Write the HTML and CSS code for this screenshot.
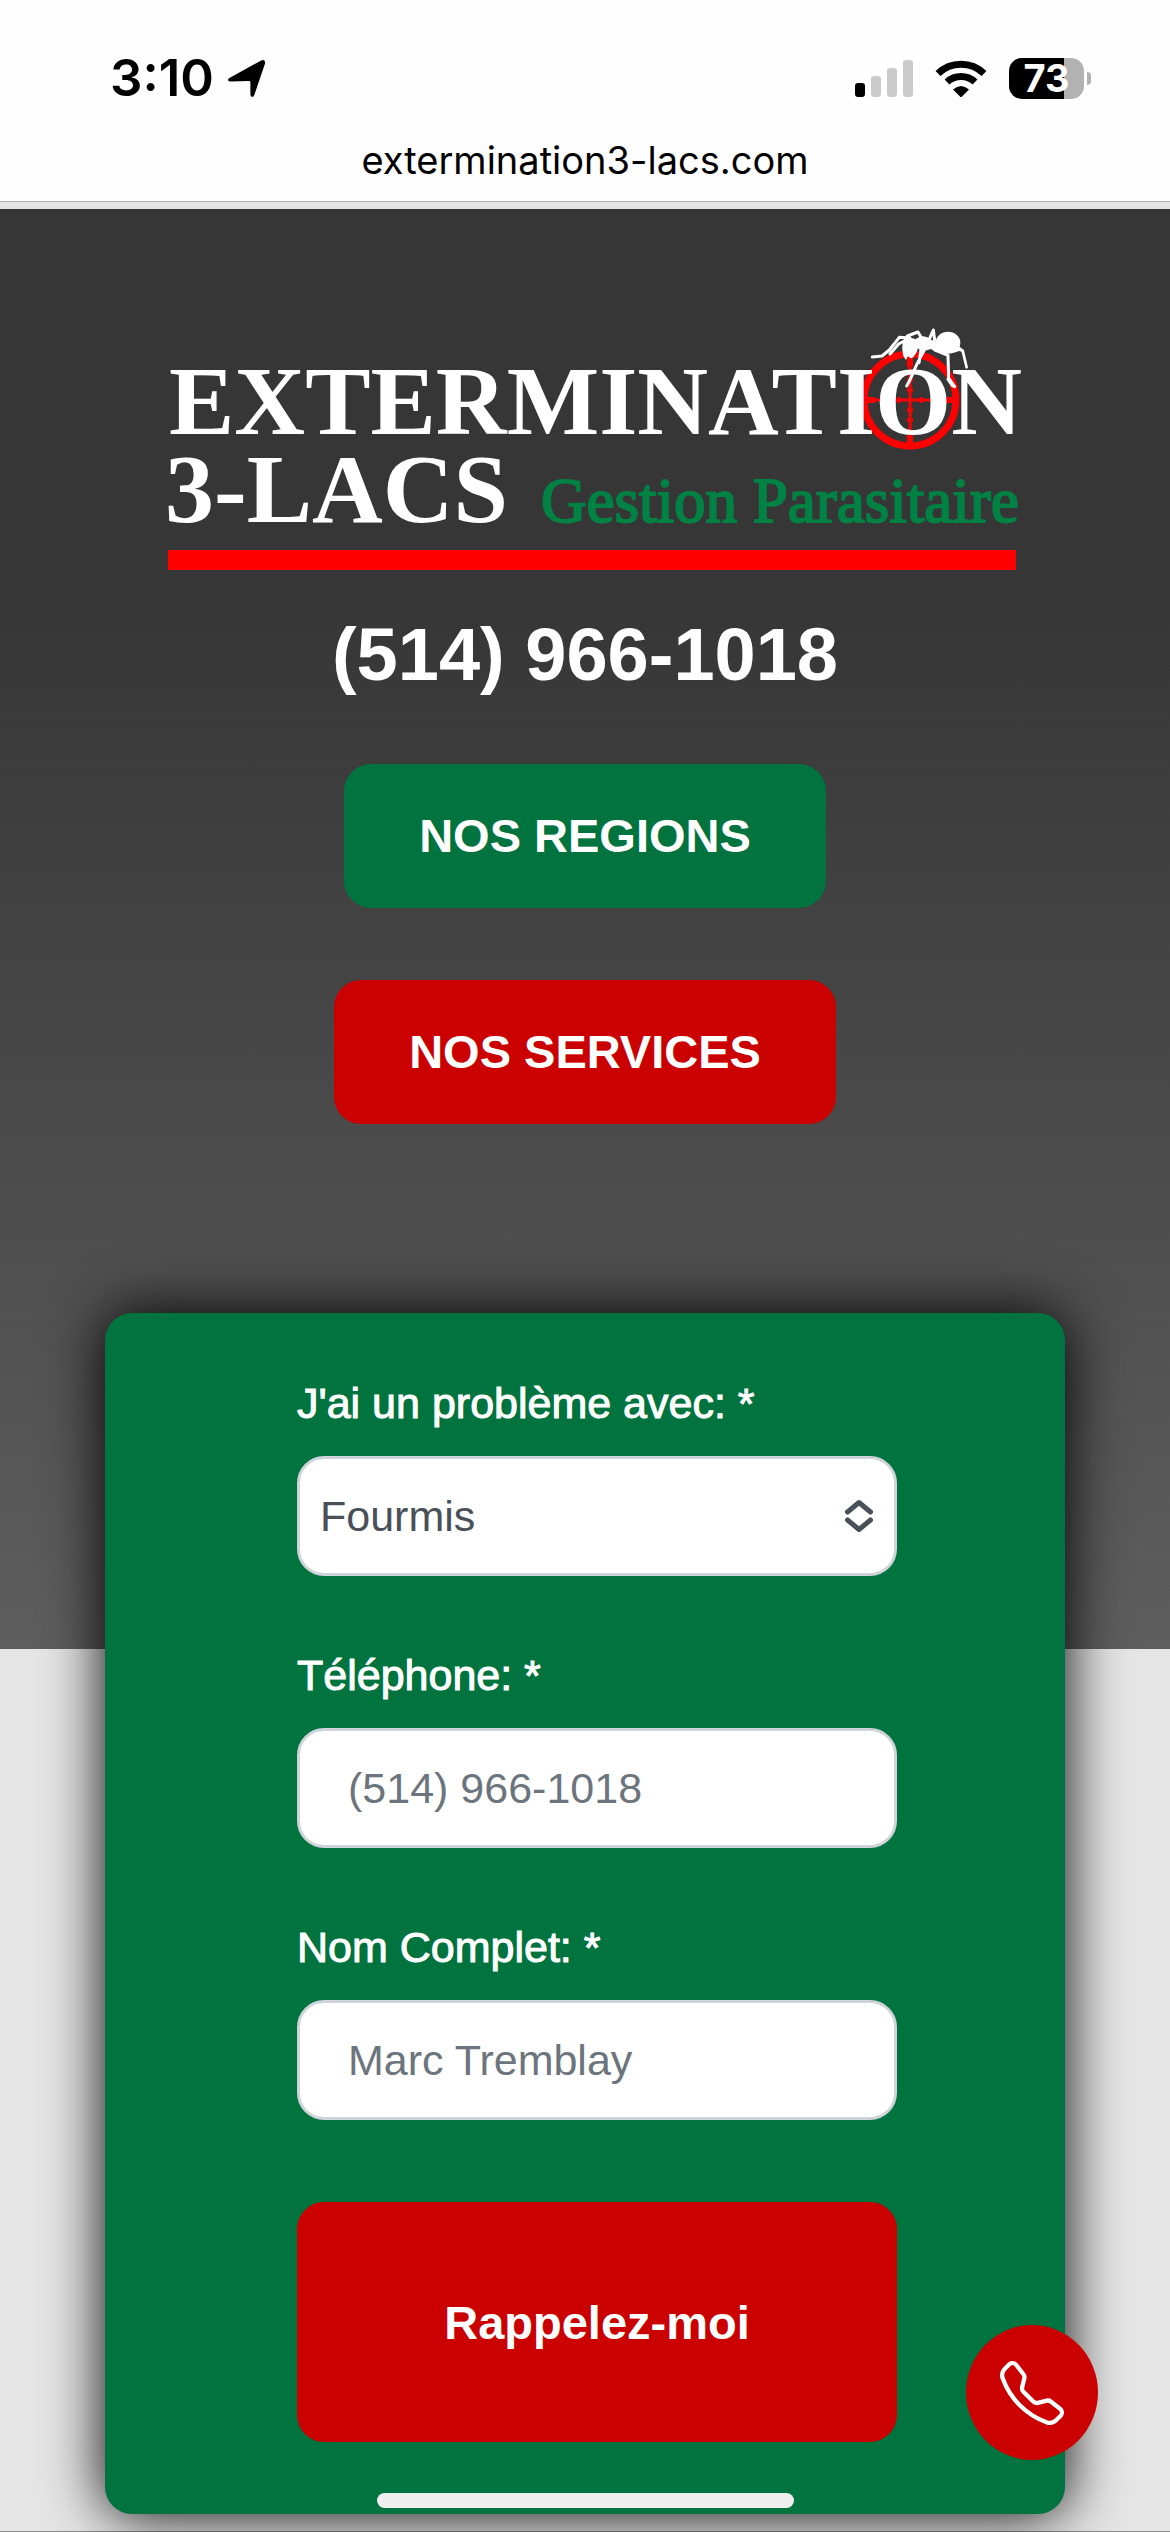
FILE: index.html
```html
<!DOCTYPE html>
<html lang="fr">
<head>
<meta charset="utf-8">
<meta name="viewport" content="width=device-width, initial-scale=1">
<title>Extermination 3-Lacs</title>
<link rel="stylesheet" href="styles.css">
</head>
<body>
<header class="browser-bar">
  <div class="status">
    <div class="status-left">
      <span class="time">3:10</span>
      <svg class="location" viewBox="0 0 40 40" aria-hidden="true"><path d="M2.500 19.500 35 1.500Q39.500 0 39 4.500L28 37Q26 41 24 37V24Q24 22.500 22.500 22.500L3 23Q-1 22 2.500 19.500Z"/></svg>
    </div>
    <div class="status-right">
      <svg class="signal" viewBox="0 0 58 38" aria-hidden="true"><rect y="24" width="10" height="14" rx="3"/><g fill="#cbcbcb"><rect x="16" y="17" width="10" height="21" rx="3"/><rect x="32" y="9" width="10" height="29" rx="3"/><rect x="48" y="1" width="10" height="37" rx="3"/></g></svg>
      <svg class="wifi" viewBox="0 0 52 38" aria-hidden="true"><g fill="none" stroke="#000" stroke-width="7"><path d="M3 14.500a33 33 0 0 1 46 0"/><path d="M12 23a20.500 20.500 0 0 1 28 0"/></g><path d="M18 30.500Q26 23.500 34 30.500L27 37.500Q26 38.500 25 37.500Z"/></svg>
      <div class="battery"><span class="battery-body">73</span><span class="battery-tip"></span></div>
    </div>
  </div>
  <div class="address">extermination3-lacs.com</div>
</header>

<main class="page">
  <section class="hero">
    <svg class="logo" viewBox="0 0 890 256" role="img" aria-label="Extermination 3-Lacs Gestion Parasitaire">
      <g fill="none" stroke="#f00">
        <circle cx="770" cy="80" r="46" stroke-width="7"/>
        <path d="M770 33v94M723 80h94" stroke-width="3"/>
        <path d="M770 33v14M770 115v12M723 80h12M804 80h13" stroke-width="6"/>
        <path d="M767 60h6M767 70h6M767 90h6M767 100h6M759 77v6M781 77v6" stroke-width="3"/>
      </g>
      <g class="logo-name">
        <text x="29" y="114">EXTERMINATION</text>
        <text x="25" y="202">3-LACS</text>
      </g>
      <text class="logo-tag" x="401" y="202">Gestion Parasitaire</text>
      <g transform="translate(680 0) scale(.3333)">
        <g fill="#fff">
          <ellipse cx="384" cy="68" rx="37" ry="33"/>
          <path d="M412 74 428 88 408 97 380 99 348 95 322 82 328 58 352 66Z"/>
          <path d="M288 56Q310 40 332 58Q344 74 330 88Q306 98 290 82Z"/>
          <path d="M250 60Q272 48 292 60Q300 86 284 106Q276 122 264 108L258 120 250 108Q244 82 250 60Z"/>
        </g>
        <g fill="none" stroke="#fff" stroke-width="9" stroke-linejoin="round" stroke-linecap="round">
          <path d="M326 62 340 30 344 60M312 66 294 36 262 48M270 54 238 52 208 90 186 108 157 111"/>
          <path d="M258 60 236 72 210 102M304 82 297 128M316 84 290 134 268 184 260 198"/>
          <path d="M345 90 384 106 386 174 404 200M384 178 398 198"/>
          <path d="M420 90 428 92 440 142" stroke-width="8"/>
        </g>
      </g>
      <rect x="28" y="230" width="848" height="20" fill="#f00"/>
    </svg>
    <a class="hero-phone" href="tel:+15149661018">(514) 966-1018</a>
    <nav class="hero-links">
      <a class="pill pill-green" href="#regions">NOS REGIONS</a>
      <a class="pill pill-red" href="#services">NOS SERVICES</a>
    </nav>
  </section>

  <section class="card">
    <form class="form">
      <div class="field">
        <label for="probleme">J'ai un problème avec: *</label>
        <div class="select-wrap">
          <select id="probleme" class="control control-select"><option>Fourmis</option></select>
          <svg class="chevrons" viewBox="0 0 28 34" aria-hidden="true"><path d="M2.500 13 14 3.500 25.500 13M2.500 21 14 30.500 25.500 21"/></svg>
        </div>
      </div>
      <div class="field">
        <label for="telephone">Téléphone: *</label>
        <input id="telephone" class="control" type="tel" placeholder="(514) 966-1018">
      </div>
      <div class="field">
        <label for="nom">Nom Complet: *</label>
        <input id="nom" class="control" type="text" placeholder="Marc Tremblay">
      </div>
      <button class="submit" type="submit">Rappelez-moi</button>
    </form>
  </section>
</main>

<a class="call" href="tel:+15149661018" aria-label="Appeler">
  <svg viewBox="0 0 16 16" aria-hidden="true"><path d="M3.654 1.328a.678.678 0 0 0-1.015-.063L1.605 2.3c-.483.484-.661 1.169-.45 1.77a17.6 17.6 0 0 0 4.168 6.608 17.6 17.6 0 0 0 6.608 4.168c.601.211 1.286.033 1.77-.45l1.034-1.034a.678.678 0 0 0-.063-1.015l-2.307-1.794a.68.68 0 0 0-.58-.122l-2.19.547a1.75 1.75 0 0 1-1.657-.459L5.482 8.062a1.75 1.75 0 0 1-.46-1.657l.548-2.19a.68.68 0 0 0-.122-.58zM1.884.511a1.745 1.745 0 0 1 2.612.163L6.29 2.98c.329.423.445.974.315 1.494l-.547 2.19a.68.68 0 0 0 .178.643l2.457 2.457a.68.68 0 0 0 .644.178l2.189-.547a1.75 1.75 0 0 1 1.494.315l2.306 1.794c.829.645.905 1.87.163 2.611l-1.034 1.034c-.74.74-1.846 1.065-2.877.702a18.6 18.6 0 0 1-7.01-4.42 18.6 18.6 0 0 1-4.42-7.009c-.362-1.03-.037-2.137.703-2.877z"/></svg>
</a>
<div class="home-indicator"></div>
</body>
</html>
```
FILE: styles.css
```css
* {
  box-sizing: border-box;
}

body {
  margin: 0;
  background: #e5e5e5;
  font-family: "Liberation Sans", Arial, sans-serif;
  font-size: 43px;
  color: #fff;
}

/* Browser chrome */
.browser-bar {
  padding: 50px 0 17px;
  background: #fefefe;
  border-bottom: 1px solid #b3b3b3;
  color: #000;
  font-family: Inter, sans-serif;
}

.status {
  display: flex;
  justify-content: space-between;
  align-items: center;
  height: 56px;
  padding: 0 79px 0 110px;
}

.status-left {
  display: flex;
  align-items: center;
  gap: 13px;
}

.time {
  font-size: 51px;
  font-weight: 600;
  line-height: 56px;
}

.location {
  width: 39px;
  height: 39px;
}

.status-right {
  display: flex;
  align-items: center;
  gap: 22px;
}

.signal {
  width: 58px;
  height: 38px;
}

.wifi {
  width: 52px;
  height: 38px;
}

.battery {
  display: flex;
  align-items: center;
  gap: 3px;
}

.battery-body {
  width: 75px;
  height: 41px;
  border-radius: 13px;
  background: linear-gradient(to right, #000 73%, #b2b2b2 73%);
  color: #fff;
  font-size: 38px;
  font-weight: 700;
  line-height: 41px;
  text-align: center;
}

.battery-tip {
  width: 4px;
  height: 13px;
  border-radius: 0 4px 4px 0;
  background: #b2b2b2;
}

.address {
  margin-top: 30px;
  font-size: 38px;
  line-height: 48px;
  text-align: center;
}

/* Hero */
.page {
  padding: 7px 0 17px;
  border-bottom: 1px solid #8c8c8c;
}

.hero {
  display: flex;
  flex-direction: column;
  align-items: center;
  padding: 111px 24px 525px;
  background: linear-gradient(to bottom, #363636 27%, #5e5e5e);
}

.logo {
  width: 890px;
  max-width: 100%;
  height: auto;
}

.logo-name {
  fill: #fff;
  font-family: "Liberation Serif", serif;
  font-size: 98px;
  font-weight: 700;
}

.logo-tag {
  fill: #008244;
  stroke: #008244;
  stroke-width: 2px;
  font-family: "Liberation Serif", serif;
  font-size: 63px;
}

.hero-phone {
  margin-top: 35px;
  color: #fff;
  font-size: 74px;
  font-weight: 700;
  line-height: 88px;
  text-decoration: none;
}

.hero-links {
  display: flex;
  flex-direction: column;
  align-items: center;
  gap: 72px;
  margin-top: 65px;
}

.pill {
  padding: 0 75px;
  border-radius: 27px;
  color: #fff;
  font-size: 47px;
  font-weight: 700;
  line-height: 144px;
  text-decoration: none;
}

.pill-green {
  background: #00733f;
}

.pill-red {
  background: #cb0000;
}

/* Callback card */
.card {
  width: calc(100% - 210px);
  margin: -336px auto 0;
  padding: 58px 0 72px;
  border-radius: 27px;
  background: #00733f;
  box-shadow: 0 0 60px #000;
  position: relative;
}

.form {
  display: flex;
  flex-direction: column;
  gap: 67px;
  margin: 0 17.5% 0 20%;
}

.field {
  display: flex;
  flex-direction: column;
  gap: 21px;
}

.field label {
  line-height: 64px;
  -webkit-text-stroke: 1px #fff;
}

.control {
  width: 100%;
  height: 120px;
  padding: 0 48px;
  border: 3px solid #ced4da;
  border-radius: 27px;
  background: #fff;
  color: #495057;
  font: inherit;
}

.control::placeholder {
  color: #6c757d;
  opacity: 1;
}

.select-wrap {
  display: grid;
  align-items: center;
}

.control-select {
  grid-area: 1 / 1;
  padding: 0 20px;
  appearance: none;
}

.chevrons {
  grid-area: 1 / 1;
  justify-self: end;
  width: 28px;
  height: 34px;
  margin-right: 24px;
  fill: none;
  stroke: #495057;
  stroke-width: 5;
  stroke-linecap: round;
  stroke-linejoin: round;
  pointer-events: none;
}

.submit {
  height: 240px;
  margin-top: 15px;
  border: 0;
  border-radius: 27px;
  background: #cb0000;
  color: #fff;
  font: inherit;
  font-size: 47px;
  font-weight: 700;
}

/* Floating items */
.call {
  position: fixed;
  right: 72px;
  bottom: 72px;
  display: grid;
  place-items: center;
  width: 132px;
  height: 135px;
  border-radius: 50%;
  background: #cb0000;
}

.call svg {
  width: 64px;
  height: 64px;
  fill: #fff;
}

.home-indicator {
  position: fixed;
  bottom: 24px;
  left: 50%;
  width: 417px;
  height: 15px;
  margin-left: -208px;
  border-radius: 8px;
  background: #eee;
}
```
